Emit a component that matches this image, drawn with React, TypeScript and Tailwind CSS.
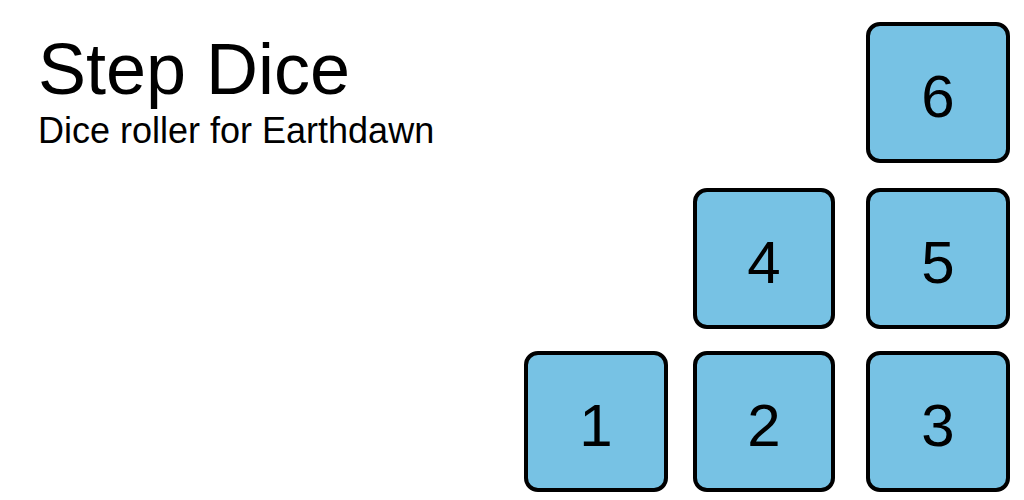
import type { FC } from 'react';

const font = { fontFamily: '"Liberation Sans", Arial, Helvetica, sans-serif' };

const DieButton: FC<{ step: number; className?: string }> = ({ step, className = '' }) => (
  <button
    className={`h-[141px] rounded-[14px] border-4 border-black bg-[#77c2e4] text-black text-[60px] leading-none pt-[9px] flex items-center justify-center ${className}`}
  >
    {step}
  </button>
);

export default function App() {
  return (
    <div className="w-[1024px] h-[500px] bg-white flex justify-between overflow-hidden" style={font}>
      {/* Header */}
      <div className="pl-[38px] pt-[33px]">
        <h1 className="text-[72px] leading-none text-black">Step Dice</h1>
        <p className="text-[36px] leading-none text-black mt-[8px]">Dice roller for Earthdawn</p>
      </div>

      {/* Dice grid */}
      <div className="pt-[22px] pr-[14px] grid grid-cols-[144px_142px_150px] grid-rows-[141px_141px_141px] gap-x-[25px] h-fit">
        <DieButton step={6} className="col-start-3 row-start-1 w-[144px] justify-self-end" />
        <DieButton step={4} className="col-start-2 row-start-2 w-[142px] mt-[25px]" />
        <DieButton step={5} className="col-start-3 row-start-2 w-[144px] justify-self-end mt-[25px]" />
        <DieButton step={1} className="col-start-1 row-start-3 w-[144px] mt-[47px]" />
        <DieButton step={2} className="col-start-2 row-start-3 w-[142px] mt-[47px]" />
        <DieButton step={3} className="col-start-3 row-start-3 w-[144px] justify-self-end mt-[47px]" />
      </div>
    </div>
  );
}
